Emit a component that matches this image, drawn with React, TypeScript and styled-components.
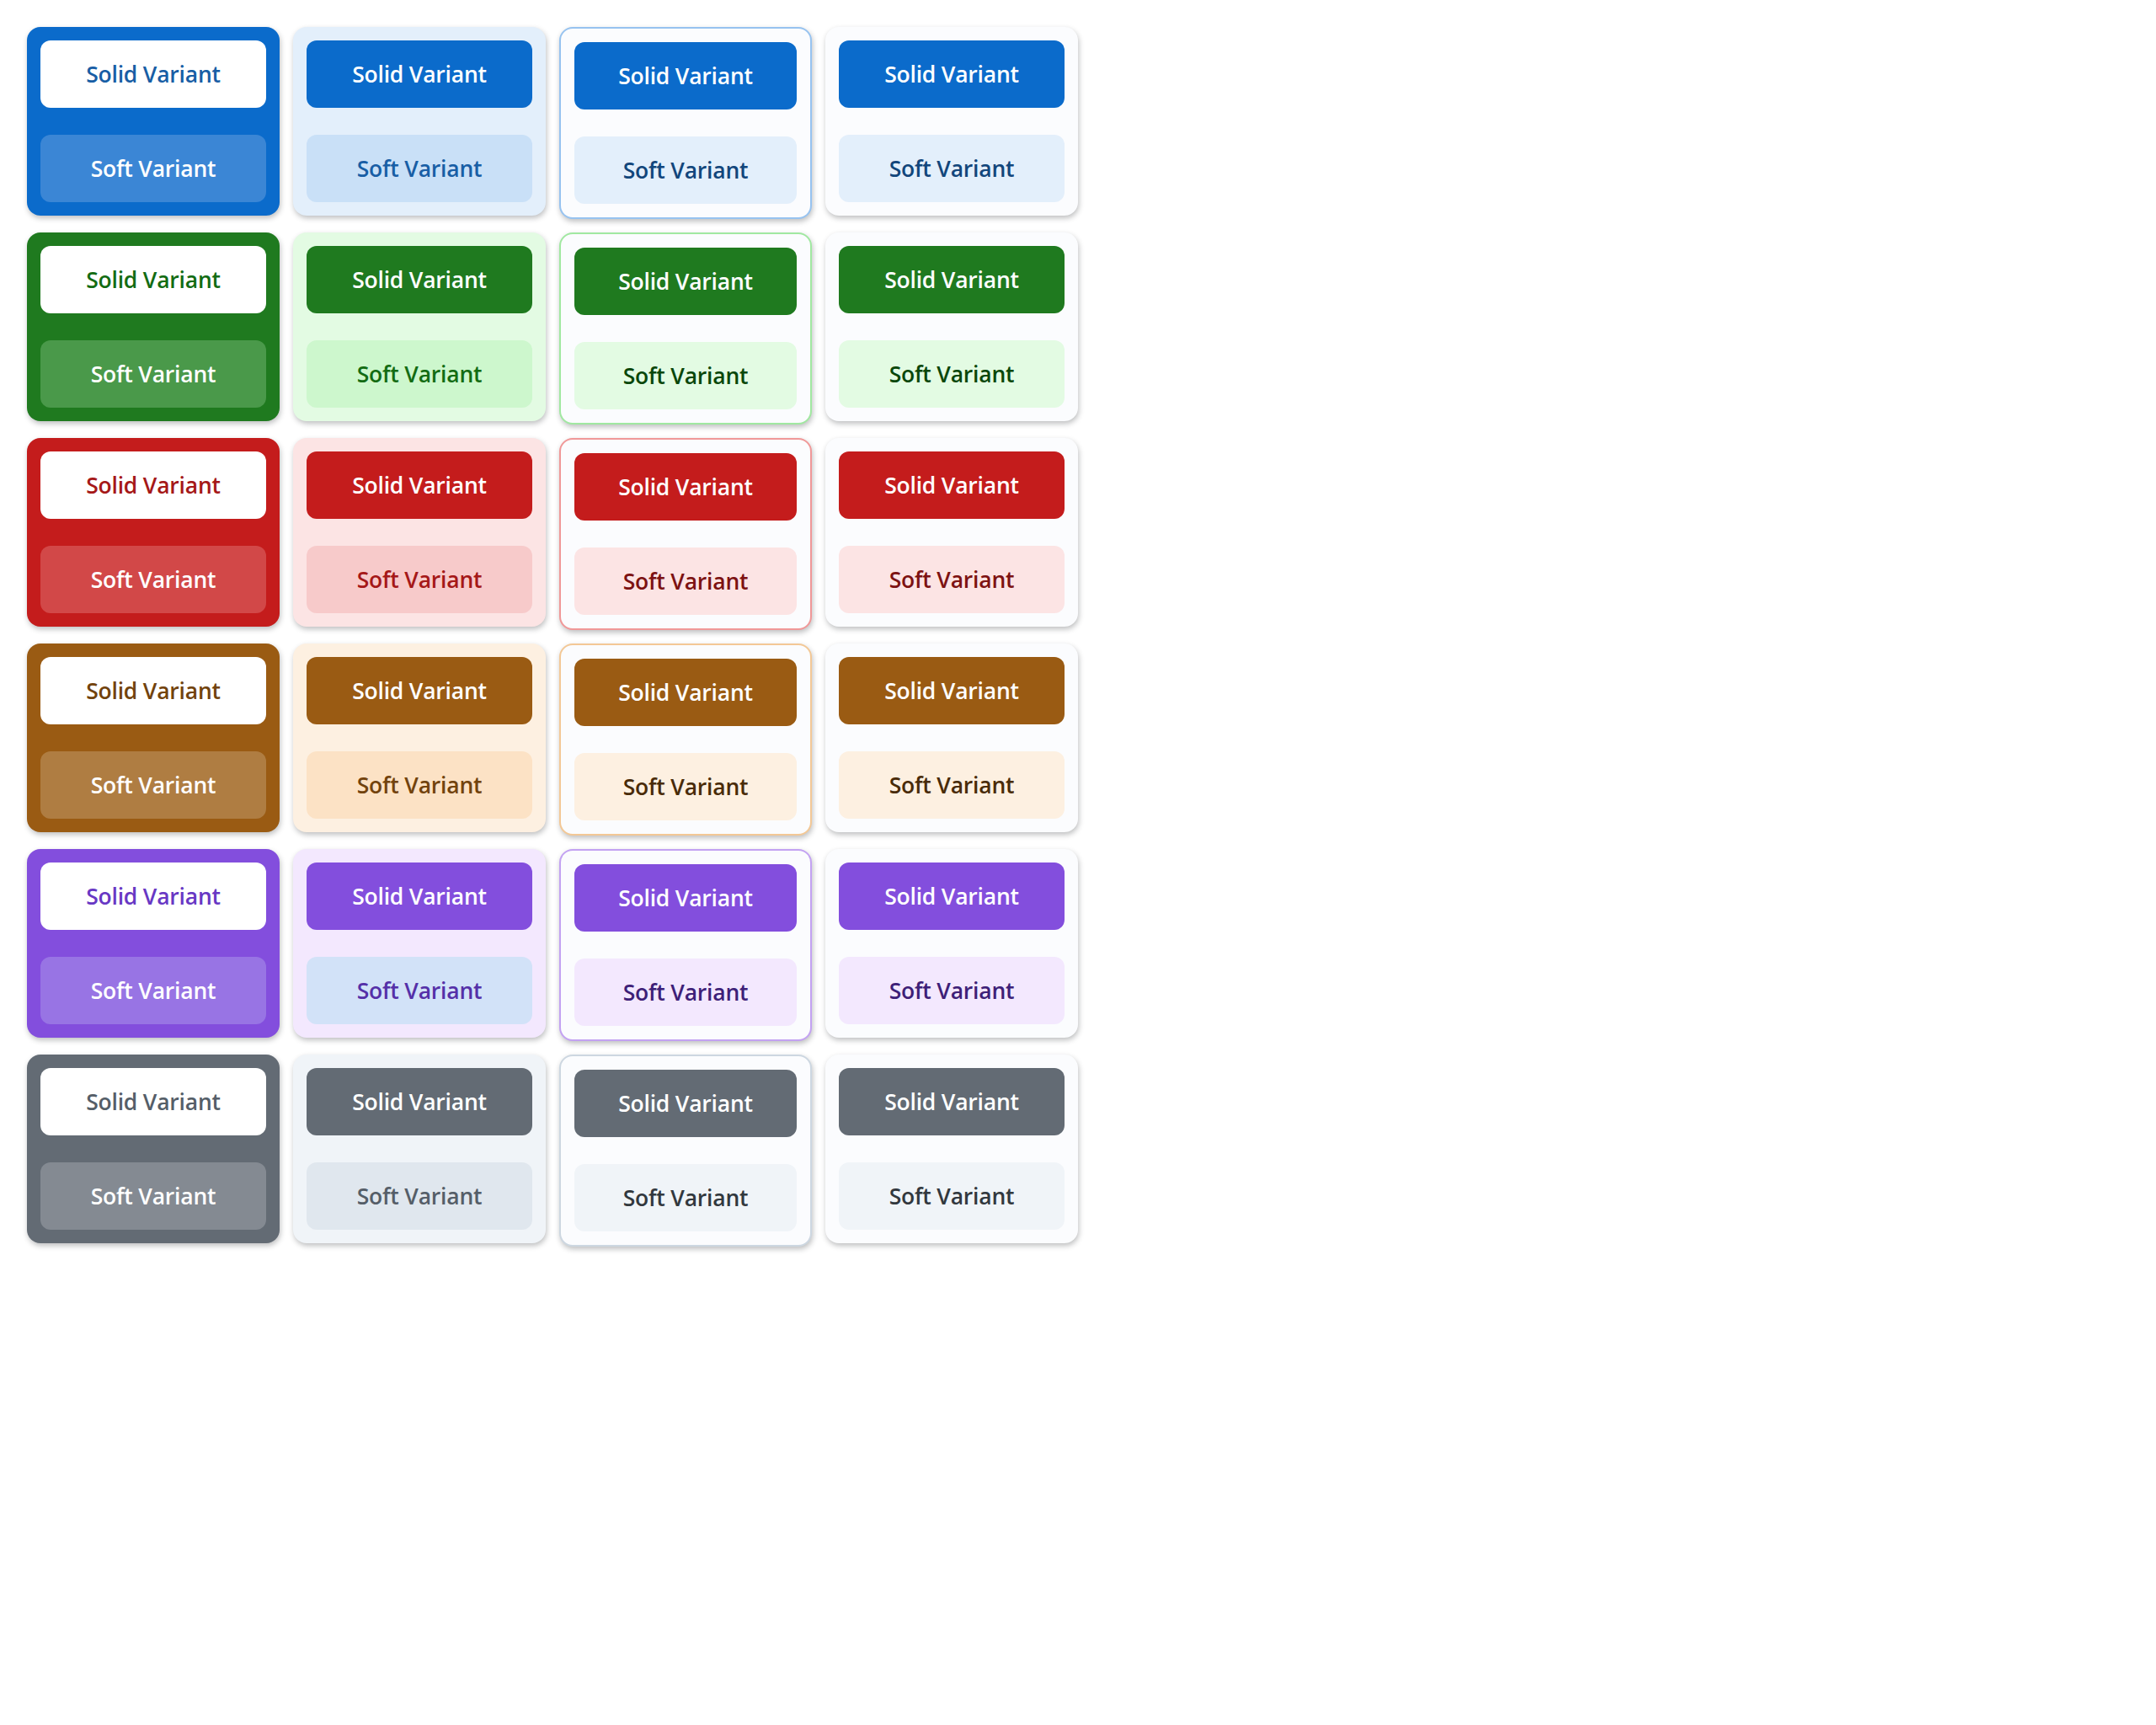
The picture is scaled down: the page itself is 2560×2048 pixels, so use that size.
import React from "react";
import styled, { createGlobalStyle, css } from "styled-components";

type Palette = {
  solid: string;
  onWhite: string;
  invSoftBg: string;
  softCard: string;
  softInSoft: string;
  softInSoftText: string;
  border: string;
  softBg: string;
  softText: string;
};

const palettes: Record<string, Palette> = {
  primary: {
    solid: "#0B6BCB",
    onWhite: "#185EA5",
    invSoftBg: "#3B86D5",
    softCard: "#E3EFFB",
    softInSoft: "#C9E0F7",
    softInSoftText: "#185EA5",
    border: "#97C3F0",
    softBg: "#E3EFFB",
    softText: "#12467B",
  },
  success: {
    solid: "#1F7A1F",
    onWhite: "#136C13",
    invSoftBg: "#4A994A",
    softCard: "#E3FBE3",
    softInSoft: "#CDF7CD",
    softInSoftText: "#136C13",
    border: "#A1E8A1",
    softBg: "#E3FBE3",
    softText: "#0A470A",
  },
  danger: {
    solid: "#C41C1C",
    onWhite: "#A51818",
    invSoftBg: "#D24848",
    softCard: "#FCE4E4",
    softInSoft: "#F7CACA",
    softInSoftText: "#A51818",
    border: "#F09898",
    softBg: "#FCE4E4",
    softText: "#7D1212",
  },
  warning: {
    solid: "#9A5B13",
    onWhite: "#72430D",
    invSoftBg: "#AF7D42",
    softCard: "#FDF0E1",
    softInSoft: "#FCE2C5",
    softInSoftText: "#72430D",
    border: "#F3C896",
    softBg: "#FDF0E1",
    softText: "#492B08",
  },
  purple: {
    solid: "#834EDD",
    onWhite: "#6838C4",
    invSoftBg: "#9874E4",
    softCard: "#F3E8FE",
    softInSoft: "#D2E2F8",
    softInSoftText: "#5530A8",
    border: "#C3A2F2",
    softBg: "#F3E8FE",
    softText: "#3E1F78",
  },
  neutral: {
    solid: "#636B74",
    onWhite: "#555E68",
    invSoftBg: "#848A92",
    softCard: "#F0F4F8",
    softInSoft: "#E0E7EE",
    softInSoftText: "#555E68",
    border: "#CDD7E1",
    softBg: "#F0F4F8",
    softText: "#32383E",
  },
};

type CardVariant = "solid" | "soft" | "outlined" | "plain";

const GlobalStyle = createGlobalStyle`
  html, body {
    margin: 0;
    padding: 0;
    background: #ffffff;
  }
  body {
    font-family: "Open Sans", "Noto Sans", Arial, sans-serif;
  }
`;

const Page = styled.main`
  padding: 32px;
`;

const Grid = styled.div`
  display: grid;
  grid-template-columns: repeat(4, 300px);
  column-gap: 16px;
  row-gap: 16px;
  align-items: start;
`;

const Card = styled.div<{ $variant: CardVariant; $p: Palette }>`
  box-sizing: border-box;
  width: 300px;
  display: flex;
  flex-direction: column;
  gap: 32px;
  padding: 16px;
  border-radius: 16px;
  box-shadow: 1px 3px 6px rgba(20, 25, 30, 0.28);
  ${({ $variant, $p }) => {
    switch ($variant) {
      case "solid":
        return css`
          background: ${$p.solid};
        `;
      case "soft":
        return css`
          background: ${$p.softCard};
        `;
      case "outlined":
        return css`
          background: #fbfcfe;
          border: 2px solid ${$p.border};
        `;
      default:
        return css`
          background: #fbfcfe;
        `;
    }
  }}
`;

const Button = styled.button<{ $bg: string; $fg: string }>`
  height: 80px;
  width: 100%;
  border: none;
  border-radius: 12px;
  display: flex;
  align-items: center;
  justify-content: center;
  font-family: "Open Sans", "Noto Sans", Arial, sans-serif;
  font-size: 26.5px;
  font-weight: 600;
  letter-spacing: -0.2px;
  background: ${({ $bg }) => $bg};
  color: ${({ $fg }) => $fg};
  cursor: pointer;
`;

const buttonColors = (variant: CardVariant, p: Palette) => {
  if (variant === "solid") {
    return {
      solid: { bg: "#ffffff", fg: p.onWhite },
      soft: { bg: p.invSoftBg, fg: "#ffffff" },
    };
  }
  if (variant === "soft") {
    return {
      solid: { bg: p.solid, fg: "#ffffff" },
      soft: { bg: p.softInSoft, fg: p.softInSoftText },
    };
  }
  return {
    solid: { bg: p.solid, fg: "#ffffff" },
    soft: { bg: p.softBg, fg: p.softText },
  };
};

const rows = ["primary", "success", "danger", "warning", "purple", "neutral"];
const variants: CardVariant[] = ["solid", "soft", "outlined", "plain"];

export default function App() {
  return (
    <>
      <GlobalStyle />
      <Page>
        <Grid>
          {rows.map((name) =>
            variants.map((v) => {
              const p = palettes[name];
              const c = buttonColors(v, p);
              return (
                <Card key={`${name}-${v}`} $variant={v} $p={p}>
                  <Button $bg={c.solid.bg} $fg={c.solid.fg}>
                    Solid Variant
                  </Button>
                  <Button $bg={c.soft.bg} $fg={c.soft.fg}>
                    Soft Variant
                  </Button>
                </Card>
              );
            })
          )}
        </Grid>
      </Page>
    </>
  );
}
